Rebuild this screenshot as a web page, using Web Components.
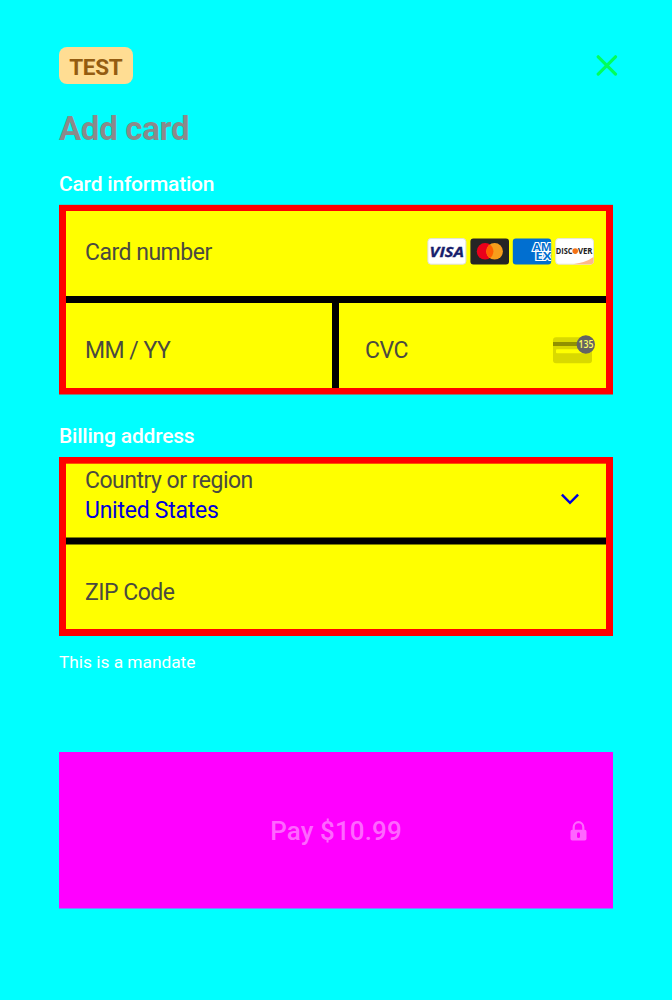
<!DOCTYPE html>
<html lang="en"><head><meta charset="utf-8"><title>Add card</title>
<style>html,body{margin:0;background:#0ff}body{font-family:Roboto,sans-serif;height:1000px;overflow:hidden}</style></head>
<body>
<payment-sheet></payment-sheet>
<script>
const define=(name,html)=>customElements.define(name,class extends HTMLElement{
  constructor(){super();const t=document.createElement('template');t.innerHTML=html;
    this.attachShadow({mode:'open'}).append(t.content.cloneNode(true));}
});

define('test-badge',`<style>:host{display:block;box-sizing:border-box;width:73.5px;height:37px;border-radius:8px;background:#ffdd93;color:#945c11;font-weight:700;font-size:22.5px;line-height:40px;text-align:center;letter-spacing:-.3px}</style><slot></slot>`);

define('close-button',`<style>:host{display:block;width:22px;height:22px}svg{display:block}</style>
<svg width="22" height="22" viewBox="0 0 22 22"><path d="M2.2 1.8 19.5 19.1M19.5 1.8 2.2 19.1" stroke="#00ff5b" stroke-width="3.2" stroke-linecap="round"/></svg>`);

define('section-label',`<style>:host{display:block;color:#fff;font-weight:500;font-size:21px;line-height:26px;letter-spacing:-.21px;white-space:nowrap}</style><slot></slot>`);

define('field-group',`<style>:host{display:flex;flex-direction:column;box-sizing:border-box;border:solid #f00;border-width:6px 7px;background:#000;gap:7px;box-shadow:0 1px #808080,0 -1px #28d7d7}
:host([tight]){gap:6px;border-bottom-width:7px;box-shadow:none}</style><slot></slot>`);

define('field-row',`<style>:host{display:grid;grid-template-columns:266px 1fr;gap:7px}</style><slot></slot>`);

define('form-field',`<style>:host{display:flex;box-sizing:border-box;align-items:center;justify-content:space-between;background:#ff0;color:#4a4a40;padding:0 11px 0 19px;font-size:23px;letter-spacing:-.5px;white-space:nowrap}
.t{display:flex;flex-direction:column;line-height:30px}::slotted([slot=value]){color:#00d;letter-spacing:-.26px}</style>
<div class="t"><span><slot></slot></span><slot name="value"></slot></div><slot name="icon"></slot>`);

define('card-brands',`<style>:host{display:flex;gap:3px;letter-spacing:0}svg{display:block}text{font-family:"Open Sans",sans-serif;font-weight:700}</style>
<svg width="40" height="27" viewBox="0 0 40 27"><rect x=".9" y=".6" width="38" height="25.6" rx="3" fill="#fff" stroke="#dfe0da"/><text x="2.6" y="18.8" font-size="14.8" font-style="italic" textLength="34.4" lengthAdjust="spacingAndGlyphs" fill="#171e6c" stroke="#171e6c" stroke-width=".3">VISA</text></svg>
<svg width="39" height="27" viewBox="0 0 39 27"><rect x=".4" y=".4" width="38.6" height="26" rx="3" fill="#252525"/><circle cx="15.1" cy="13.3" r="8.3" fill="#eb001b"/><circle cx="24.6" cy="13.3" r="8.3" fill="#f79e1b"/><path d="M19.85 6.5a8.3 8.3 0 0 1 0 13.6a8.3 8.3 0 0 1 0-13.6" fill="#ff5f00"/></svg>
<svg width="40" height="27" viewBox="0 0 40 27"><clipPath id="c"><rect x=".8" y=".4" width="38.4" height="26" rx="3"/></clipPath><g clip-path="url(#c)"><rect width="40" height="27" fill="#016fd0"/><text fill="#016fd0" stroke="#fff" stroke-width="2.2" paint-order="stroke" font-size="10.8"><tspan x="20.8" y="13" textLength="19" lengthAdjust="spacingAndGlyphs">AM</tspan><tspan x="23.2" y="21.9" textLength="16.5" lengthAdjust="spacingAndGlyphs">EX</tspan></text></g></svg>
<svg width="40" height="27" viewBox="0 0 40 27"><rect x=".7" y=".6" width="37.8" height="25.6" rx="3" fill="#fff" stroke="#e5e5da"/><path d="M18 26.2Q31 24.5 38.5 19V23.5Q38.5 26.2 36 26.2Z" fill="#fdb78c"/><text x=".8" y="15.9" font-size="7.9" textLength="16.8" lengthAdjust="spacingAndGlyphs" fill="#222">DISC</text><circle cx="20.2" cy="13.1" r="2.8" fill="#f47216"/><text x="22.9" y="15.9" font-size="7.9" textLength="14.6" lengthAdjust="spacingAndGlyphs" fill="#222">VER</text></svg>`);

define('cvc-icon',`<style>:host{display:block;width:42px;height:29px;margin-top:-3px;letter-spacing:0}svg{display:block;overflow:visible}</style>
<svg width="42" height="29" viewBox="0 0 42 29"><rect y="2.3" width="39" height="26" rx="3" fill="#d9d900"/><path d="M0 7H39V11H0Z" fill="#919100"/><rect x="3" y="14.3" width="29" height="4" rx="1" fill="#ff0"/><circle cx="32.8" cy="9.5" r="9.2" fill="#636363"/><text x="25.6" y="13.3" font-family="Open Sans,sans-serif" font-size="10.5" font-weight="600" textLength="15" lengthAdjust="spacingAndGlyphs" fill="#ff6">135</text></svg>`);

define('chevron-icon',`<style>:host{display:block;width:20px;height:12px;margin:6px 15px 0 0}svg{display:block}</style>
<svg width="20" height="12" viewBox="0 0 20 12"><path d="M1.9 1.7 10 9.8 18.1 1.7" fill="none" stroke="#00d" stroke-width="2.5"/></svg>`);

define('pay-button',`<style>:host{display:grid;grid-template-columns:1fr auto 1fr;align-items:center;box-sizing:border-box;height:156px;background:#f0f;box-shadow:0 1px #8080ff;color:#ff66ff;font-weight:500;font-size:26px;line-height:32px;letter-spacing:.1px}
.l{grid-column:2;margin-top:2px}svg{display:block;justify-self:end;margin:2px 26px 0 0}</style>
<span class="l"><slot></slot></span>
<svg width="17" height="20" viewBox="0 0 17 20"><path d="M3.7 10V6.2A4.8 5 0 0 1 13.3 6.2V10" fill="none" stroke="#f6f" stroke-width="2.2"/><path fill="#f6f" fill-rule="evenodd" d="M2.3 8.8h12.4a1.8 1.8 0 0 1 1.8 1.8v7.2a1.8 1.8 0 0 1-1.8 1.8h-12.4a1.8 1.8 0 0 1-1.8-1.8v-7.2a1.8 1.8 0 0 1 1.8-1.8ZM8.5 11.3a1.5 1.5 0 0 0-1.5 1.5v2.6a1.5 1.5 0 0 0 3 0v-2.6a1.5 1.5 0 0 0-1.5-1.5Z"/></svg>`);

define('payment-sheet',`<style>:host{display:block;padding:47px 59px 0}
header{display:flex;justify-content:space-between;height:37px}close-button{margin:8px -5px 0 0}
h1{margin:25px 0 0;font-size:33px;line-height:40px;font-weight:700;color:#8a8a8a;letter-spacing:-.3px}
.ci{margin-top:22px}.ba{margin-top:29px}field-group{margin-top:8px}
.num{height:85px;padding-bottom:1px}card-brands{margin-top:-3px}.half{height:85px;padding-top:10px}.cvc{padding-left:26px}
.country{height:75px;padding-bottom:9px;border-top:1px solid #ff5000;border-bottom:1px solid #808000}.zip{height:85px;padding-top:11px;border-top:1px solid #808000}
p{margin:15px 0 0;color:#fff;font-size:17.3px;line-height:22px}
pay-button{margin-top:79px}</style>
<header><test-badge>TEST</test-badge><close-button></close-button></header>
<h1>Add card</h1>
<section-label class="ci">Card information</section-label>
<field-group><form-field class="num">Card number<card-brands slot="icon"></card-brands></form-field>
<field-row><form-field class="half">MM / YY</form-field><form-field class="half cvc">CVC<cvc-icon slot="icon"></cvc-icon></form-field></field-row></field-group>
<section-label class="ba">Billing address</section-label>
<field-group tight><form-field class="country">Country or region<span slot="value">United States</span><chevron-icon slot="icon"></chevron-icon></form-field>
<form-field class="zip">ZIP Code</form-field></field-group>
<p>This is a mandate</p>
<pay-button>Pay $10.99</pay-button>`);
</script>
</body></html>
